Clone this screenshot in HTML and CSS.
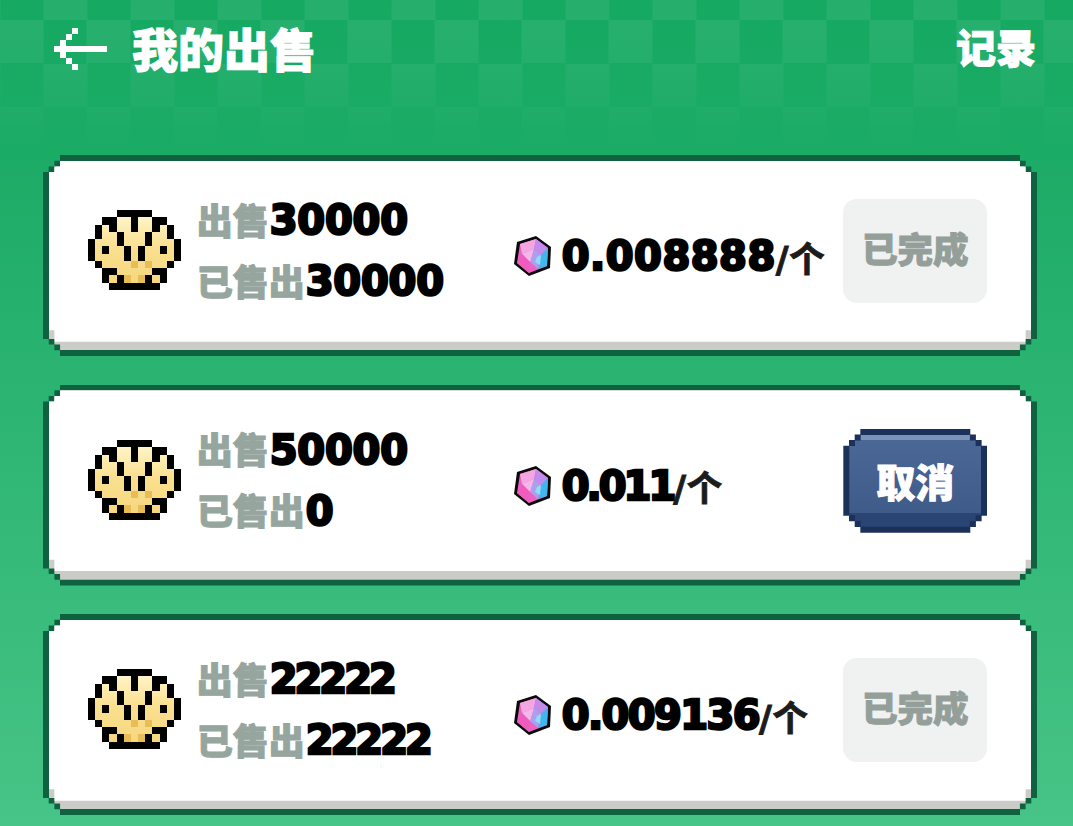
FILE: index.html
```html
<!DOCTYPE html>
<html lang="zh-CN">
<head>
  <meta charset="UTF-8" />
  <title>我的出售</title>
  <link rel="stylesheet" href="styles.css">
</head>
<body>
  <svg class="defs" width="0" height="0">
    <defs>
      <linearGradient id="shellFill" x1="0" y1="0" x2="0" y2="1">
        <stop offset="0" stop-color="#fff4c8" />
        <stop offset="0.45" stop-color="#fae08f" />
        <stop offset="1" stop-color="#f6d77f" />
      </linearGradient>
      <symbol id="shell" viewBox="0 0 13 11" preserveAspectRatio="none" shape-rendering="crispEdges">
        <path fill="url(#shellFill)" d="M4 1h5v1h2v2h1v3h-1v1h-1v2H3V8H2V7H1V2h1V1z" />
        <path fill="#e9bd55" d="M6 7h1v1H6zM8 7h1v1H8zM5 9h1v1H5zM7 9h1v1H7z" />
        <path fill="#000" d="M4 0h5v1H4zM2 1h2v1H2zM6 1h1v2H6zM9 1h2v1H9zM1 2h1v2H1zM3 2h1v1H3zM9 2h1v1H9zM11 2h1v2h-1zM4 3h1v2H4zM8 3h1v2H8zM0 4h1v3H0zM12 4h1v3h-1zM2 5h1v1H2zM5 5h1v2H5zM7 5h1v2H7zM10 5h1v1h-1zM1 7h1v1H1zM11 7h1v1h-1zM2 8h2v1H2zM9 8h2v1H9zM2 9h1v1H2zM4 9h1v1H4zM8 9h1v1H8zM10 9h1v1h-1zM3 10h7v1H3z" />
      </symbol>
      <symbol id="gem" viewBox="0 0 40 42">
        <polygon points="23,1 38,12 37,33 16,41 1,29 4,7" fill="#0a0a0a" />
        <polygon points="23,4 35,13 34,31 16,38 4,28 7,9" fill="#ec62c4" />
        <polygon points="7,9 23,4 21,14 9,19" fill="#f4a6e2" />
        <polygon points="23,4 35,13 28,20 21,14" fill="#c18ceb" />
        <polygon points="35,13 34,31 25,34 28,20" fill="#42b6ee" />
        <polygon points="21,14 28,20 25,34 17,27" fill="#a9a0ee" />
        <polygon points="24,22 28,20 27,30 22,27" fill="#8fdcf6" />
        <polygon points="9,19 21,14 17,27" fill="#f3b8ea" />
        <polygon points="4,28 9,19 17,27 16,38" fill="#ef5cbe" />
      </symbol>
    </defs>
  </svg>

  <header class="topbar">
    <a class="back">
      <svg width="53" height="42" viewBox="0 0 53 42" shape-rendering="crispEdges">
        <path fill="#fff" d="M18 0h6v6h-6zM12 6h6v6h-6zM6 12h6v6H6zM0 18h53v6H0zM6 24h6v6H6zM12 30h6v6h-6zM18 36h6v6h-6z" />
      </svg>
    </a>
    <h1>我的出售</h1>
    <a class="history">记录</a>
  </header>

  <main class="list">
    <section class="card">
      <div class="card-inner">
        <div class="card-body">
          <svg class="shell"><use href="#shell" /></svg>
          <div class="info">
            <div class="line"><span class="label">出售</span><span class="num">30000</span></div>
            <div class="line"><span class="label">已售出</span><span class="num">30000</span></div>
          </div>
          <div class="price">
            <svg class="gem"><use href="#gem" /></svg>
            <span class="num wide">0.008888</span><span class="unit"><i>/</i>个</span>
          </div>
          <div class="status done">已完成</div>
        </div>
      </div>
    </section>

    <section class="card">
      <div class="card-inner">
        <div class="card-body">
          <svg class="shell"><use href="#shell" /></svg>
          <div class="info">
            <div class="line"><span class="label">出售</span><span class="num">50000</span></div>
            <div class="line"><span class="label">已售出</span><span class="num">0</span></div>
          </div>
          <div class="price">
            <svg class="gem"><use href="#gem" /></svg>
            <span class="num narrow">0.011</span><span class="unit"><i>/</i>个</span>
          </div>
          <button class="status cancel"><span class="cancel-face">取消</span></button>
        </div>
      </div>
    </section>

    <section class="card">
      <div class="card-inner">
        <div class="card-body">
          <svg class="shell"><use href="#shell" /></svg>
          <div class="info">
            <div class="line"><span class="label">出售</span><span class="num twos">22222</span></div>
            <div class="line"><span class="label">已售出</span><span class="num twos">22222</span></div>
          </div>
          <div class="price">
            <svg class="gem"><use href="#gem" /></svg>
            <span class="num snug">0.009136</span><span class="unit"><i>/</i>个</span>
          </div>
          <div class="status done">已完成</div>
        </div>
      </div>
    </section>
  </main>
</body>
</html>
```

FILE: styles.css
```css
* {
  box-sizing: border-box;
}

html,
body {
  height: 100%;
}

body {
  margin: 0;
  overflow: hidden;
  background: linear-gradient(180deg, #15a961 0, #1cab66 155px, #47c487 100%);
  font-family: "Noto Sans CJK SC", "Noto Sans", sans-serif;
  font-weight: 900;
}

.defs {
  position: absolute;
}

.topbar {
  display: flex;
  align-items: flex-start;
  height: 155px;
  padding: 20px 37px 0 54px;
  color: #fff;
  -webkit-text-stroke: 1px #fff;
  background:
    linear-gradient(180deg, rgba(26, 171, 101, 0) 30px, #1aab65 150px),
    conic-gradient(rgba(255, 255, 255, 0.07) 25%, transparent 0 50%, rgba(255, 255, 255, 0.07) 0 75%, transparent 0) 43.5px 20px / 87px 87px;
}

.back {
  display: flex;
  margin-top: 8px;
  margin-right: 25px;
}

.topbar h1 {
  flex: 1;
  margin: 0;
  font-size: 46px;
  line-height: 54px;
  font-weight: 900;
}

.history {
  margin-top: -1px;
  font-size: 40px;
  line-height: 54px;
}

.list {
  display: flex;
  flex-direction: column;
  gap: 28.5px;
  padding: 0 36px 0 43px;
}

.card {
  height: 201px;
  padding: 5.7px;
  background: #0f6240;
  clip-path: polygon(
    17px 0, calc(100% - 17px) 0, calc(100% - 17px) 5.7px, calc(100% - 11.4px) 5.7px,
    calc(100% - 11.4px) 11.4px, calc(100% - 5.7px) 11.4px, calc(100% - 5.7px) 17px, 100% 17px,
    100% calc(100% - 17px), calc(100% - 5.7px) calc(100% - 17px), calc(100% - 5.7px) calc(100% - 11.4px), calc(100% - 11.4px) calc(100% - 11.4px),
    calc(100% - 11.4px) calc(100% - 5.7px), calc(100% - 17px) calc(100% - 5.7px), calc(100% - 17px) 100%, 17px 100%,
    17px calc(100% - 5.7px), 11.4px calc(100% - 5.7px), 11.4px calc(100% - 11.4px), 5.7px calc(100% - 11.4px),
    5.7px calc(100% - 17px), 0 calc(100% - 17px), 0 17px, 5.7px 17px,
    5.7px 11.4px, 11.4px 11.4px, 11.4px 5.7px, 17px 5.7px
  );
}

.card-inner {
  height: 100%;
  padding-bottom: 8.6px;
  background: #cbccc7;
  clip-path: polygon(
    11.4px 0, calc(100% - 11.4px) 0, calc(100% - 11.4px) 5.7px, calc(100% - 5.7px) 5.7px,
    calc(100% - 5.7px) 11.4px, 100% 11.4px, 100% calc(100% - 11.4px), calc(100% - 5.7px) calc(100% - 11.4px),
    calc(100% - 5.7px) calc(100% - 5.7px), calc(100% - 11.4px) calc(100% - 5.7px), calc(100% - 11.4px) 100%, 11.4px 100%,
    11.4px calc(100% - 5.7px), 5.7px calc(100% - 5.7px), 5.7px calc(100% - 11.4px), 0 calc(100% - 11.4px),
    0 11.4px, 5.7px 11.4px, 5.7px 5.7px, 11.4px 5.7px
  );
}

.card-body {
  display: flex;
  align-items: center;
  height: 100%;
  padding: 0 44px 0 39px;
  background: #fff;
  clip-path: polygon(
    0 0, 100% 0, 100% calc(100% - 11.4px), calc(100% - 5.7px) calc(100% - 11.4px),
    calc(100% - 5.7px) 100%, 5.7px 100%, 5.7px calc(100% - 11.4px), 0 calc(100% - 11.4px)
  );
}

.shell {
  flex: none;
  width: 93px;
  height: 80px;
  margin-top: -2px;
}

.info {
  flex: none;
  width: 316px;
  margin-left: 16px;
  margin-top: -1px;
}

.line {
  display: flex;
  align-items: center;
  height: 61px;
}

.label {
  margin-top: -3px;
  font-size: 36px;
  color: #96a69f;
  -webkit-text-stroke: 1px #96a69f;
}

.num {
  margin-left: 1px;
  font-family: "DejaVu Sans", sans-serif;
  font-weight: 700;
  font-size: 40px;
  letter-spacing: -0.2px;
  color: #000;
  -webkit-text-stroke: 2.5px #000;
}

.num.wide {
  letter-spacing: 0.5px;
}

.num.snug {
  letter-spacing: -1.6px;
}

.num.narrow {
  letter-spacing: -3px;
}

.num.twos {
  letter-spacing: -3px;
}

.price {
  flex: 1;
  display: flex;
  align-items: center;
  margin-top: 10px;
}

.gem {
  flex: none;
  width: 40px;
  height: 42px;
  margin-right: 8px;
}

.unit {
  font-size: 35px;
  font-weight: 700;
  color: #1c1c1c;
  -webkit-text-stroke: 1px #1c1c1c;
}

.unit i {
  margin-right: 1px;
  font-family: "DejaVu Sans", sans-serif;
  font-style: normal;
  font-weight: 700;
}

.status {
  flex: none;
  display: flex;
  align-items: center;
  justify-content: center;
  width: 144px;
  height: 104px;
}

.done {
  padding-bottom: 8px;
  border-radius: 14px;
  background: #f0f1f1;
  font-size: 35.5px;
  color: #949f9a;
  -webkit-text-stroke: 1px #949f9a;
}

.cancel {
  padding: 6px;
  border: 0;
  background: #1c3159;
  font-family: inherit;
  font-weight: 900;
  clip-path: polygon(
    17px 0, calc(100% - 17px) 0, calc(100% - 17px) 5.7px, calc(100% - 11.4px) 5.7px,
    calc(100% - 11.4px) 11.4px, calc(100% - 5.7px) 11.4px, calc(100% - 5.7px) 17px, 100% 17px,
    100% calc(100% - 17px), calc(100% - 5.7px) calc(100% - 17px), calc(100% - 5.7px) calc(100% - 11.4px), calc(100% - 11.4px) calc(100% - 11.4px),
    calc(100% - 11.4px) calc(100% - 5.7px), calc(100% - 17px) calc(100% - 5.7px), calc(100% - 17px) 100%, 17px 100%,
    17px calc(100% - 5.7px), 11.4px calc(100% - 5.7px), 11.4px calc(100% - 11.4px), 5.7px calc(100% - 11.4px),
    5.7px calc(100% - 17px), 0 calc(100% - 17px), 0 17px, 5.7px 17px,
    5.7px 11.4px, 11.4px 11.4px, 11.4px 5.7px, 17px 5.7px
  );
}

.cancel-face {
  display: flex;
  align-items: center;
  justify-content: center;
  width: 100%;
  height: 100%;
  padding-top: 9px;
  border-top: 5px solid #7b93b9;
  border-bottom: 14px solid #2a4473;
  background: linear-gradient(180deg, #4a6796, #3f5b8a);
  font-size: 39px;
  line-height: 1;
  color: #fff;
  -webkit-text-stroke: 1px #fff;
  clip-path: polygon(
    11.4px 0, calc(100% - 11.4px) 0, calc(100% - 11.4px) 5.7px, calc(100% - 5.7px) 5.7px,
    calc(100% - 5.7px) 11.4px, 100% 11.4px, 100% calc(100% - 11.4px), calc(100% - 5.7px) calc(100% - 11.4px),
    calc(100% - 5.7px) calc(100% - 5.7px), calc(100% - 11.4px) calc(100% - 5.7px), calc(100% - 11.4px) 100%, 11.4px 100%,
    11.4px calc(100% - 5.7px), 5.7px calc(100% - 5.7px), 5.7px calc(100% - 11.4px), 0 calc(100% - 11.4px),
    0 11.4px, 5.7px 11.4px, 5.7px 5.7px, 11.4px 5.7px
  );
}
```
